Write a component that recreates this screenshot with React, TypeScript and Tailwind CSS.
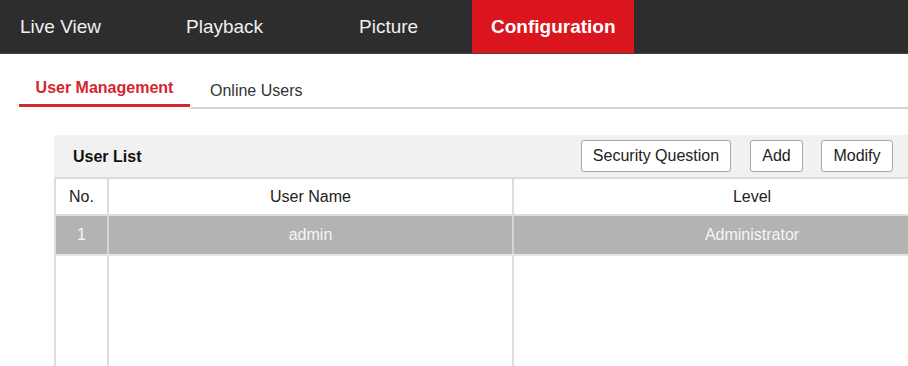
import React from "react";

export default function App() {
  const nav = [
    { label: "Live View", w: "w-[166px]" },
    { label: "Playback", w: "w-[173px]" },
    { label: "Picture", w: "w-[133px]" },
  ];
  return (
    <div className="w-[908px] h-[366px] overflow-hidden bg-white font-['Liberation_Sans',Arial,sans-serif] text-[#222]">
      <div className="h-[54px] bg-[#2d2d2d] flex border-b border-[#444]">
        {nav.map((n) => (
          <div key={n.label} className={`${n.w} pl-[20px] pt-[2px] flex items-center text-[19px] text-[#f0f0f0]`}>
            {n.label}
          </div>
        ))}
        <div className="w-[162px] bg-[#da151d] flex items-center pl-[19px] pt-[2px] text-[19px] font-bold text-white">
          Configuration
        </div>
      </div>
      <div className="pt-[18px] pl-[19px] flex items-start">
        <div className="w-[171px] h-[35px] flex items-center justify-center border-b-[3px] border-[#d3262e] text-[16px] font-bold text-[#d3262e]">
          User Management
        </div>
        <div className="flex-1 h-[37px] border-b-2 border-[#d4d4d4] flex items-center pl-[20px] pt-[2px] text-[16px] text-[#333]">
          Online Users
        </div>
      </div>
      <div className="ml-[54px] mt-[26px] w-[936px]">
        <div className="w-[854px] h-[42px] bg-[#f1f1f1] flex items-center pl-[19px] pr-[15px]">
          <div className="flex-1 text-[16px] font-bold text-[#111] pt-[1px]">User List</div>
          <button className="h-[32px] w-[150px] bg-white border border-[#a8a8a8] rounded-[3px] text-[16px] text-[#222]">
            Security Question
          </button>
          <button className="ml-[19px] h-[32px] w-[53px] bg-white border border-[#a8a8a8] rounded-[3px] text-[16px] text-[#222]">
            Add
          </button>
          <button className="ml-[18px] h-[32px] w-[72px] bg-white border border-[#a8a8a8] rounded-[3px] text-[16px] text-[#222]">
            Modify
          </button>
        </div>
        <div className="border-l-2 border-[#dcdcdc]">
          <div className="flex h-[39px] border-t-2 border-b-2 border-[#dcdcdc] text-[16px] text-[#222]">
            <div className="w-[53px] flex items-center justify-center border-r-2 border-[#dcdcdc]">No.</div>
            <div className="w-[405px] flex items-center justify-center border-r-2 border-[#dcdcdc]">User Name</div>
            <div className="w-[476px] flex items-center justify-center">Level</div>
          </div>
          <div className="flex h-[40px] bg-[#b3b3b3] border-b-2 border-[#e4e4e4] text-[16px] text-[#f6f6f6]">
            <div className="w-[53px] flex items-center justify-center border-r-2 border-[#d4d4d4]">1</div>
            <div className="w-[405px] flex items-center justify-center border-r-2 border-[#d4d4d4]">admin</div>
            <div className="w-[476px] flex items-center justify-center">Administrator</div>
          </div>
          <div className="flex h-[120px]">
            <div className="w-[53px] border-r-2 border-[#dcdcdc]"></div>
            <div className="w-[405px] border-r-2 border-[#dcdcdc]"></div>
            <div className="w-[476px]"></div>
          </div>
        </div>
      </div>
    </div>
  );
}
